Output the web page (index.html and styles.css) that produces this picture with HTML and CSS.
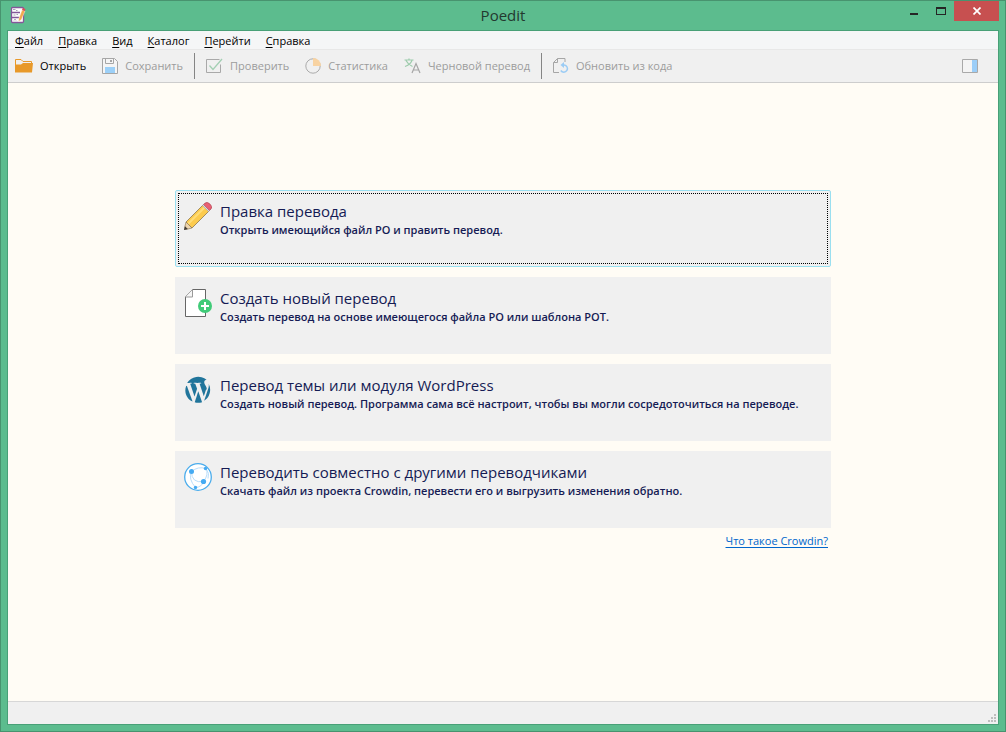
FILE: index.html
```html
<!DOCTYPE html>
<html lang="ru">
<head>
<meta charset="utf-8">
<title>Poedit</title>
<link rel="stylesheet" href="styles.css">
</head>
<body>
<div class="window">
  <header class="titlebar">
    <svg class="app-icon" width="16" height="18" viewBox="0 0 16 18">
      <rect x="1.500" y="1.500" width="12" height="15" rx="1" fill="#fff" stroke="#85579a" stroke-width="1.300"/>
      <path d="M1 6.500h9M1 11.500h8" stroke="#85579a" stroke-width="1.300"/>
      <path d="M3 3.500h2.500M6 4.500h1.500M3.500 9h2M6.500 8.500h1.500M4 14.500l1-1.500 1 1.500" stroke="#a9a4b5" fill="none"/>
      <path d="M8.500 15.500l.5-3.500L12 4l3 1-3.500 8.500z" fill="#f2a94e" stroke="#fff" stroke-width=".4"/>
      <path d="M12 4l.8-2 2.700 1-.7 2z" fill="#dd4b57"/>
    </svg>
    <h1 class="title">Poedit</h1>
    <div class="controls">
      <button class="control" aria-label="Свернуть"><svg width="10" height="10" viewBox="0 0 10 10"><path d="M1 7h8v2H1z" fill="#252525"/></svg></button>
      <button class="control" aria-label="Развернуть"><svg width="10" height="10" viewBox="0 0 10 10"><path fill-rule="evenodd" d="M0 1h10v8H0zM1 3v5h8V3z" fill="#252525"/></svg></button>
      <button class="control control-close" aria-label="Закрыть"><svg width="8" height="8" viewBox="0 0 8 8"><path d="M.5.5l7 7M7.500.5l-7 7" stroke="#fff" stroke-width="1.700"/></svg></button>
    </div>
  </header>
  <div class="client">
    <nav class="menu">
      <button class="menu-item"><u>Ф</u>айл</button>
      <button class="menu-item"><u>П</u>равка</button>
      <button class="menu-item"><u>В</u>ид</button>
      <button class="menu-item"><u>К</u>аталог</button>
      <button class="menu-item"><u>П</u>ерейти</button>
      <button class="menu-item"><u>С</u>правка</button>
    </nav>
    <div class="toolbar">
      <button class="tool">
        <svg width="18" height="16" viewBox="0 0 18 16"><path d="M.5 13V1.500h5.500l2 2h8.500V6" fill="none" stroke="#e8992a"/><path d="M0 14.500V6.500h6l2-1.500h10l-1 9.500z" fill="#e8992a"/></svg>
        <span>Открыть</span>
      </button>
      <button class="tool" disabled>
        <svg width="16" height="16" viewBox="0 0 16 16"><path d="M.5.5h12l3 3v12H.5z" fill="#f5f5f5" stroke="#a6a6a6"/><path d="M3.500.5v5h8v-5" fill="none" stroke="#a6a6a6"/><path d="M8 2h2v2H8z" fill="#a6a6a6"/><path d="M3 9h10v6H3z" fill="#9cd0f8"/></svg>
        <span>Сохранить</span>
      </button>
      <span class="separator"></span>
      <button class="tool" disabled>
        <svg width="17" height="16" viewBox="0 0 17 16"><path d="M13.500 1.500H.5v13h14v-8" fill="none" stroke="#a9a9a9"/><path d="M3.500 7.500l3.500 4 9-10.500" fill="none" stroke="#a3cfb3" stroke-width="1.300"/></svg>
        <span>Проверить</span>
      </button>
      <button class="tool" disabled>
        <svg width="16" height="16" viewBox="0 0 16 16"><circle cx="8" cy="8" r="7.200" fill="none" stroke="#ababab"/><path d="M8 0a8 8 0 0 1 8 8H8z" fill="#f8d3a2"/></svg>
        <span>Статистика</span>
      </button>
      <button class="tool" disabled>
        <svg width="17" height="16" viewBox="0 0 17 16"><path d="M.5 2h9M5 .5V2M2 2.500q2 4 6.500 6M8 2.500Q6 7 1 8.500" fill="none" stroke="#9ccbab" stroke-width="1.200"/><path d="M8 15l4-9.500L16 15M9.500 12h5" fill="none" stroke="#a6a6a6" stroke-width="1.200"/></svg>
        <span>Черновой перевод</span>
      </button>
      <span class="separator"></span>
      <button class="tool" disabled>
        <svg width="16" height="16" viewBox="0 0 16 16"><path d="M6 14.500H.5v-10l4-4h7.500V4M4.500.5v4h-4" fill="none" stroke="#a6a6a6"/><path d="M7.800 12.500a3.600 3.600 0 1 0 3.400-5.500H9" fill="none" stroke="#9bccf5" stroke-width="1.500"/><path d="M7.500 7l3.500-3v6z" fill="#9bccf5"/></svg>
        <span>Обновить из кода</span>
      </button>
      <button class="tool tool-panel" aria-label="Боковая панель">
        <svg width="16" height="14" viewBox="0 0 16 14"><path d="M.5.5h15v13H.5z" fill="#f4f4f4" stroke="#a9a9a9"/><path d="M10 1h5v12h-5z" fill="#9ccef8"/></svg>
      </button>
    </div>
    <main class="welcome">
      <div class="actions">
        <button class="action action-focused">
          <svg class="action-icon" width="28" height="28" viewBox="0 0 28 28"><path d="M2 20L19 3l6 6L8 26z" fill="#fccb4e" stroke="#806a45" stroke-width=".7"/><path d="M4 22L21 5" stroke="#ffdd78" stroke-width="2"/><path d="M2 20l6 6-8 2z" fill="#edd4ad" stroke="#806a45" stroke-width=".6"/><path d="M1 24.200L3.800 27 0 28z" fill="#3e3a39"/><path d="M18.500 3.500l2-2 6 6-2 2z" fill="#d3d8df" stroke="#929aa4" stroke-width=".5"/><path d="M20.500 1.500Q23-1 26 2t1 5l-1.500 1.500-6-6z" fill="#e95f73" stroke="#a84958" stroke-width=".6"/></svg>
          <span class="action-text"><strong>Правка перевода</strong><small>Открыть имеющийся файл PO и править перевод.</small></span>
        </button>
        <button class="action">
          <svg class="action-icon" width="28" height="28" viewBox="0 0 28 28"><path d="M1.500 8L8.500.5h13v27h-20z" fill="#fff" stroke="#666"/><path d="M1.500 8h7V.5" fill="#f5f5f5" stroke="#999"/><circle cx="21" cy="17" r="7" fill="#40cb78"/><path d="M17 17h8M21 13v8" stroke="#fff" stroke-width="2"/></svg>
          <span class="action-text"><strong>Создать новый перевод</strong><small>Создать перевод на основе имеющегося файла PO или шаблона POT.</small></span>
        </button>
        <button class="action">
          <svg class="action-icon" width="28" height="28" viewBox="0 0 28 28"><g transform="translate(1 1) scale(1.080)" fill="#21759b"><path d="M1 8.500C-1 14 1.500 20.300 7 22.800L1.700 8.200z"/><path d="M20.200 11.500c0-1.600-.6-2.700-1.100-3.500-.7-1.100-1.300-2-1.300-3.100 0-1.200.9-2.300 2.200-2.300A12 12 0 0 0 2 5.600c2.400 0 3.900-.2 3.900-.2.500 0 .6.700.1.700l-1.200.1 4 11.800 2.400-7.100-1.700-4.700-1.200-.1c-.5 0-.4-.8.100-.7 2.600.2 3.600.2 6.200 0 .6 0 .6.700.1.700l-1.200.1 3.900 11.700 1.200-3.600c.4-1.500.9-2.400.9-2.800z"/><path d="M12.300 13.100L9 23.400c2.200.7 4.600.6 6.800-.1z"/><path d="M21.900 6.300c.4 1.800 0 3.400-.6 5.100L17.700 22a12 12 0 0 0 4.200-15.700z"/></g></svg>
          <span class="action-text"><strong>Перевод темы или модуля WordPress</strong><small>Создать новый перевод. Программа сама всё настроит, чтобы вы могли сосредоточиться на переводе.</small></span>
        </button>
        <button class="action">
          <svg class="action-icon" width="28" height="28" viewBox="0 0 28 28"><circle cx="14" cy="14" r="13.300" fill="#fff" stroke="#4aacec" stroke-width="1.300"/><path d="M7.500 8.500Q14 3 22 5.500q3 6-2.500 13Q18 24 11.500 24.500M7.500 8.500q0 12 12 10M7.500 8.500Q4 16 11.500 24.500M22 5.500q4 5 2 10" fill="none" stroke="#b9ddfa"/><g fill="#45aaf2"><circle cx="7.500" cy="8.500" r="2.500"/><circle cx="19.500" cy="18.500" r="2.600"/><circle cx="21.500" cy="5.500" r="1.700"/><circle cx="11.500" cy="24.500" r="1.700"/></g></svg>
          <span class="action-text"><strong>Переводить совместно с другими переводчиками</strong><small>Скачать файл из проекта Crowdin, перевести его и выгрузить изменения обратно.</small></span>
        </button>
        <a class="help-link" href="#">Что такое Crowdin?</a>
      </div>
    </main>
    <footer class="statusbar">
      <svg width="8" height="8" viewBox="0 0 8 8"><path d="M6 0h2v2H6zM3 3h2v2H3zM6 3h2v2H6zM0 6h2v2H0zM3 6h2v2H3zM6 6h2v2H6z" fill="#bdbdbd"/></svg>
    </footer>
  </div>
</div>
</body>
</html>
```
FILE: styles.css
```css
* { box-sizing: border-box; }
body { margin: 0; font: 11px/16px "Open Sans", "Noto Sans", sans-serif; color: #000; }
button { margin: 0; padding: 0; border: 0; background: none; font: inherit; color: inherit; text-align: left; }
svg { display: block; flex: none; }

.window { display: flex; flex-direction: column; height: 100vh; padding: 0 6px 6px; background: #5cbc8e; border: 1px solid #48936f; }
.titlebar { display: grid; grid-template-columns: 1fr auto 1fr; align-items: start; height: 29px; }
.app-icon { margin: 5px 0 0 3px; }
.title { margin: 4px 0 0; font-size: 15px; line-height: 20px; font-weight: 400; color: #23392f; }
.controls { display: flex; justify-content: flex-end; }
.control { display: flex; justify-content: center; align-items: center; width: 27px; height: 20px; }
.control-close { width: 45px; background: #c75050; }

.client { display: flex; flex-direction: column; flex: 1; min-height: 0; border: 1px solid #48a077; background: #fffcf5; }
.menu { display: flex; gap: 15px; height: 19px; padding: 2px 7px 0; background: #f5f6f7; border-bottom: 1px solid #e8e8e8; }
.menu u { text-underline-offset: 2px; }
.toolbar { display: flex; align-items: center; gap: 16px; height: 33px; padding: 0 20px 0 7px; background: #f0f0f0; border-bottom: 1px solid #cdcdcd; }
.tool { display: flex; align-items: center; gap: 7px; white-space: nowrap; }
.tool:disabled { color: #9c9c9c; }
.tool-panel { margin-left: auto; }
.separator { width: 1px; height: 26px; margin: 0 -5px; background: #858585; }

.welcome { flex: 1; padding: 107px 167px 0; }
.actions { display: flex; flex-direction: column; gap: 10px; }
.action { display: flex; align-items: flex-start; gap: 8px; height: 77px; padding: 12px 9px; background: #f0f0f0; color: #151b54; }
.action-focused { border: 1px solid #9adff0; border-radius: 2px; padding: 11px 8px; outline: 1px dotted #000; outline-offset: -4px; }
.action-text strong, .action-text small { display: block; }
.action-text strong { font-size: 15px; line-height: 18px; font-weight: 400; }
.action-text small { font-size: 11px; line-height: 20px; font-weight: 600; }
.help-link { align-self: flex-end; margin: -5px 3px 0 0; color: #0066cc; text-underline-offset: 2px; }

.statusbar { display: flex; justify-content: flex-end; align-items: flex-end; height: 23px; padding: 2px; background: #f0f0f0; border-top: 1px solid #d7d7d7; }
```
